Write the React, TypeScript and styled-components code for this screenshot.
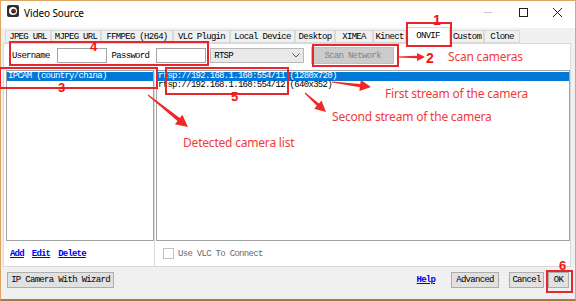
import React from "react";
import styled, { createGlobalStyle } from "styled-components";

const UI_FONT = `"Liberation Mono", "DejaVu Sans Mono", monospace`;
const NOTE_FONT = `"Noto Sans", "Liberation Sans", sans-serif`;
const NOTE_RED = "#f23a3a";

const GlobalStyle = createGlobalStyle`
  html, body {
    margin: 0;
    padding: 0;
    background: #fff;
  }
  body {
    width: 576px;
    height: 301px;
    overflow: hidden;
  }
  * {
    box-sizing: border-box;
  }
`;

const Window = styled.div`
  position: relative;
  width: 576px;
  height: 301px;
  border: 1px solid #e2a561;
  border-bottom: 2px solid #a57a48;
  background: #f0f0f0;
  display: flex;
  flex-direction: column;
  font-family: ${UI_FONT};
  font-size: 9px;
  letter-spacing: -0.7px;
  color: #000;
`;

const TitleBar = styled.div`
  height: 27px;
  flex: none;
  background: #fff;
  display: flex;
  align-items: flex-start;
  padding-left: 6px;
`;

const AppIcon = styled.svg`
  margin-top: 4px;
  flex: none;
`;

const Title = styled.div`
  margin-left: 5px;
  margin-top: 5px;
  font-family: ${NOTE_FONT};
  font-size: 10px;
  letter-spacing: -0.1px;
  line-height: 14px;
`;

const Captions = styled.div`
  margin-left: auto;
  display: flex;
`;

const CaptionButton = styled.div`
  width: 35px;
  height: 22px;
  display: flex;
  align-items: center;
  justify-content: center;
`;

const TabStrip = styled.div`
  height: 15px;
  flex: none;
  display: flex;
  align-items: flex-end;
  padding-left: 4px;
`;

const Tab = styled.div<{ $w: number; $active?: boolean }>`
  width: ${(p) => p.$w}px;
  height: ${(p) => (p.$active ? 17 : 13)}px;
  margin-bottom: ${(p) => (p.$active ? -1 : 0)}px;
  position: relative;
  z-index: ${(p) => (p.$active ? 1 : 0)};
  border: 1px solid #d9d9d9;
  border-bottom: ${(p) => (p.$active ? "none" : "1px solid #d9d9d9")};
  background: ${(p) => (p.$active ? "#fff" : "#f0f0f0")};
  display: flex;
  align-items: center;
  justify-content: center;
  padding-top: ${(p) => (p.$active ? 0 : 1)}px;
  white-space: nowrap;
`;

const TabLabel = styled.span`
  line-height: 9px;
`;

const Panel = styled.div`
  height: 224px;
  flex: none;
  margin: 0 4px 0 2px;
  background: #fff;
  border: 1px solid #d9d9d9;
  display: flex;
  flex-direction: column;
`;

const LoginRow = styled.div`
  height: 17px;
  margin-top: 3px;
  flex: none;
  display: flex;
  align-items: center;
  padding-left: 8px;
`;

const Label = styled.span<{ $gap?: number }>`
  margin-left: ${(p) => p.$gap ?? 0}px;
  white-space: nowrap;
`;

const TextBox = styled.div`
  width: 50px;
  height: 15px;
  margin-left: 7px;
  background: #fff;
  border: 1px solid #a5a5a5;
`;

const Combo = styled.div`
  width: 94px;
  height: 15px;
  margin-left: 4px;
  background: #e9e9e9;
  border: 1px solid #b9b9b9;
  display: flex;
  align-items: center;
  padding-left: 3px;
  padding-right: 3px;
  justify-content: space-between;
`;

const Button = styled.div<{ $w: number; $disabled?: boolean }>`
  width: ${(p) => p.$w}px;
  height: 16px;
  flex: none;
  background: ${(p) => (p.$disabled ? "#cccccc" : "#e1e1e1")};
  border: 1px solid ${(p) => (p.$disabled ? "#bfbfbf" : "#adadad")};
  color: ${(p) => (p.$disabled ? "#838383" : "#000")};
  display: flex;
  align-items: center;
  justify-content: center;
  white-space: nowrap;
`;

const ScanButton = styled(Button)`
  height: 17px;
  margin-left: 7px;
`;

const Columns = styled.div`
  flex: 1;
  margin-top: 6px;
  display: flex;
  min-height: 0;
`;

const LeftColumn = styled.div`
  width: 150px;
  flex: none;
  display: flex;
  flex-direction: column;
  padding-left: 2px;
`;

const RightColumn = styled.div`
  flex: 1;
  display: flex;
  flex-direction: column;
  border-left: 1px solid #dcdcdc;
  padding-left: 1px;
`;

const ListBox = styled.div`
  flex: 1;
  border: 1px solid #a3a3a3;
  background: #fff;
  padding-top: 1px;
`;

const ListItem = styled.div<{ $selected?: boolean }>`
  height: 9px;
  line-height: 9px;
  padding-left: 1px;
  white-space: nowrap;
  background: ${(p) => (p.$selected ? "#0078d7" : "transparent")};
  color: ${(p) => (p.$selected ? "#fff" : "#000")};
`;

const ListFooter = styled.div<{ $pad: number }>`
  height: 25px;
  flex: none;
  display: flex;
  align-items: center;
  gap: 8px;
  padding-left: ${(p) => p.$pad}px;
`;

const Link = styled.span`
  color: #0000ee;
  text-decoration: underline;
  font-weight: bold;
  letter-spacing: -0.8px;
`;

const CheckBox = styled.div`
  width: 11px;
  height: 11px;
  border: 1px solid #c2c2c2;
  background: #fff;
  margin-right: -4px;
`;

const Muted = styled.span`
  color: #6a6a6a;
`;

const BottomBar = styled.div`
  flex: 1;
  display: flex;
  align-items: flex-start;
  padding: 5px 6px 0 6px;
`;

const HelpLink = styled(Link)`
  margin-left: auto;
  margin-right: 16px;
  margin-top: 3px;
`;

const Spacer = styled.div<{ $w: number }>`
  width: ${(p) => p.$w}px;
  flex: none;
`;

/* annotation layer drawn over the dialog */

const Overlay = styled.div`
  position: absolute;
  top: -1px;
  left: -1px;
  width: 576px;
  height: 301px;
  pointer-events: none;
  z-index: 5;
`;

const RedBox = styled.div<{ $x: number; $y: number; $w: number; $h: number }>`
  position: absolute;
  left: ${(p) => p.$x}px;
  top: ${(p) => p.$y}px;
  width: ${(p) => p.$w}px;
  height: ${(p) => p.$h}px;
  border: 2px solid #e5262c;
`;

const Note = styled.div<{ $x: number; $y: number }>`
  position: absolute;
  left: ${(p) => p.$x}px;
  top: ${(p) => p.$y}px;
  font-family: ${NOTE_FONT};
  font-size: 12px;
  line-height: 12px;
  letter-spacing: -0.2px;
  color: ${NOTE_RED};
  white-space: nowrap;
`;

const Num = styled.div<{ $x: number; $y: number; $size?: number }>`
  position: absolute;
  left: ${(p) => p.$x}px;
  top: ${(p) => p.$y}px;
  font-family: "Liberation Sans", Arial, sans-serif;
  font-weight: bold;
  font-size: ${(p) => p.$size ?? 13}px;
  line-height: ${(p) => (p.$size ?? 13) - 4}px;
  letter-spacing: 0;
  color: #f01414;
`;

const ArrowLayer = styled.svg`
  position: absolute;
  left: 0;
  top: 0;
`;

function arrowPoints(
  x1: number,
  y1: number,
  x2: number,
  y2: number,
  head: number,
  hw: number,
  tw: number
) {
  const dx = x2 - x1;
  const dy = y2 - y1;
  const len = Math.hypot(dx, dy);
  const ux = dx / len;
  const uy = dy / len;
  const nx = -uy;
  const ny = ux;
  const bx = x2 - ux * head;
  const by = y2 - uy * head;
  const pts = [
    [x1 + nx * 0.5, y1 + ny * 0.5],
    [bx + nx * tw, by + ny * tw],
    [bx + nx * hw, by + ny * hw],
    [x2, y2],
    [bx - nx * hw, by - ny * hw],
    [bx - nx * tw, by - ny * tw],
    [x1 - nx * 0.5, y1 - ny * 0.5],
  ];
  return pts.map((p) => `${p[0].toFixed(1)},${p[1].toFixed(1)}`).join(" ");
}

const arrows = [
  { x1: 397, y1: 57, x2: 425, y2: 57, head: 8, hw: 4, tw: 1.2 },
  { x1: 332, y1: 82, x2: 371, y2: 87, head: 11, hw: 5.5, tw: 1.6 },
  { x1: 305, y1: 93, x2: 326, y2: 112, head: 11, hw: 5.5, tw: 1.6 },
  { x1: 148, y1: 95, x2: 188, y2: 127, head: 12, hw: 6, tw: 1.8 },
];

const tabs = [
  { label: "JPEG URL", w: 46 },
  { label: "MJPEG URL", w: 50 },
  { label: "FFMPEG (H264)", w: 72 },
  { label: "VLC Plugin", w: 57 },
  { label: "Local Device", w: 65 },
  { label: "Desktop", w: 40 },
  { label: "XIMEA", w: 38 },
  { label: "Kinect", w: 33 },
  { label: "ONVIF", w: 44, active: true },
  { label: "Custom", w: 34 },
  { label: "Clone", w: 36 },
];

const streams = [
  "rtsp://192.168.1.160:554/11 (1280x720)",
  "rtsp://192.168.1.160:554/12 (640x352)",
];

export default function App() {
  return (
    <>
      <GlobalStyle />
      <Window>
        <TitleBar>
          <AppIcon width="12" height="12" viewBox="0 0 12 12">
            <rect x="0" y="0" width="12" height="12" rx="2" fill="#2f2f2f" />
            <circle cx="6" cy="6" r="4" fill="#fff" />
            <circle cx="6.6" cy="6.2" r="2.4" fill="#2f2f2f" />
            <circle cx="7.4" cy="5.4" r="0.8" fill="#d33" />
          </AppIcon>
          <Title>Video Source</Title>
          <Captions>
            <CaptionButton>
              <svg width="10" height="10" viewBox="0 0 10 10">
                <line x1="1" y1="5.5" x2="9" y2="5.5" stroke="#c6c6c6" strokeWidth="1" />
              </svg>
            </CaptionButton>
            <CaptionButton>
              <svg width="10" height="10" viewBox="0 0 10 10">
                <rect x="1.5" y="1.5" width="8" height="8" fill="none" stroke="#1e1e1e" strokeWidth="1" />
              </svg>
            </CaptionButton>
            <CaptionButton>
              <svg width="11" height="11" viewBox="0 0 11 11">
                <path d="M1 1 L10 10 M10 1 L1 10" stroke="#1e1e1e" strokeWidth="1" />
              </svg>
            </CaptionButton>
          </Captions>
        </TitleBar>

        <TabStrip>
          {tabs.map((t) => (
            <Tab key={t.label} $w={t.w} $active={t.active}>
              <TabLabel>{t.label}</TabLabel>
            </Tab>
          ))}
        </TabStrip>

        <Panel>
          <LoginRow>
            <Label>Username</Label>
            <TextBox />
            <Label $gap={5}>Password</Label>
            <TextBox />
            <Combo>
              <span>RTSP</span>
              <svg width="8" height="5" viewBox="0 0 8 5">
                <path d="M0.5 0.5 L4 4 L7.5 0.5" fill="none" stroke="#555" strokeWidth="1" />
              </svg>
            </Combo>
            <ScanButton $w={83} $disabled>
              Scan Network
            </ScanButton>
          </LoginRow>

          <Columns>
            <LeftColumn>
              <ListBox>
                <ListItem $selected>IPCAM (country/china)</ListItem>
              </ListBox>
              <ListFooter $pad={4}>
                <Link>Add</Link>
                <Link>Edit</Link>
                <Link>Delete</Link>
              </ListFooter>
            </LeftColumn>
            <RightColumn>
              <ListBox>
                {streams.map((s, i) => (
                  <ListItem key={s} $selected={i === 0}>
                    {s}
                  </ListItem>
                ))}
              </ListBox>
              <ListFooter $pad={7}>
                <CheckBox />
                <Muted>Use VLC To Connect</Muted>
              </ListFooter>
            </RightColumn>
          </Columns>
        </Panel>

        <BottomBar>
          <Button $w={107}>IP Camera With Wizard</Button>
          <HelpLink>Help</HelpLink>
          <Button $w={48}>Advanced</Button>
          <Spacer $w={10} />
          <Button $w={35}>Cancel</Button>
          <Spacer $w={4} />
          <Button $w={21}>OK</Button>
        </BottomBar>

        <Overlay>
          <RedBox $x={406} $y={22} $w={46} $h={25} />
          <RedBox $x={312} $y={44} $w={87} $h={23} />
          <RedBox $x={9} $y={41} $w={200} $h={25} />
          <RedBox $x={-1} $y={67} $w={159} $h={22} />
          <RedBox $x={165} $y={67} $w={124} $h={28} />
          <RedBox $x={546} $y={270} $w={27} $h={23} />

          <ArrowLayer width="576" height="301">
            {arrows.map((a, i) => (
              <polygon
                key={i}
                points={arrowPoints(a.x1, a.y1, a.x2, a.y2, a.head, a.hw, a.tw)}
                fill="#f02828"
              />
            ))}
          </ArrowLayer>

          <Num $x={433} $y={15} $size={14}>1</Num>
          <Num $x={426} $y={53} $size={14}>2</Num>
          <Num $x={58} $y={83}>3</Num>
          <Num $x={90} $y={42}>4</Num>
          <Num $x={231} $y={92}>5</Num>
          <Num $x={559} $y={261}>6</Num>

          <Note $x={448} $y={51}>Scan cameras</Note>
          <Note $x={385} $y={88}>First stream of the camera</Note>
          <Note $x={332} $y={111}>Second stream of the camera</Note>
          <Note $x={183} $y={137}>Detected camera list</Note>
        </Overlay>
      </Window>
    </>
  );
}
